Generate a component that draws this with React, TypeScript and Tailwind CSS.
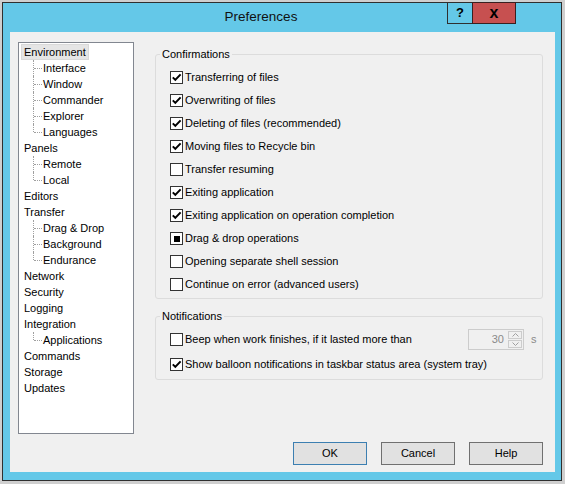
import type { ReactNode } from 'react'

type CheckState = 'on' | 'off' | 'mixed'

interface TreeNode {
  label: string
  children?: string[]
}

const tree: TreeNode[] = [
  { label: 'Environment', children: ['Interface', 'Window', 'Commander', 'Explorer', 'Languages'] },
  { label: 'Panels', children: ['Remote', 'Local'] },
  { label: 'Editors' },
  { label: 'Transfer', children: ['Drag & Drop', 'Background', 'Endurance'] },
  { label: 'Network' },
  { label: 'Security' },
  { label: 'Logging' },
  { label: 'Integration', children: ['Applications'] },
  { label: 'Commands' },
  { label: 'Storage' },
  { label: 'Updates' },
]

const confirmations: [string, CheckState][] = [
  ['Transferring of files', 'on'],
  ['Overwriting of files', 'on'],
  ['Deleting of files (recommended)', 'on'],
  ['Moving files to Recycle bin', 'on'],
  ['Transfer resuming', 'off'],
  ['Exiting application', 'on'],
  ['Exiting application on operation completion', 'on'],
  ['Drag & drop operations', 'mixed'],
  ['Opening separate shell session', 'off'],
  ['Continue on error (advanced users)', 'off'],
]

function CheckBox({ state }: { state: CheckState }) {
  return (
    <span className="flex h-[13px] w-[13px] shrink-0 items-center justify-center border border-[#333333] bg-white">
      {state === 'on' && (
        <svg width="11" height="11" viewBox="0 0 11 11">
          <path d="M1.8 5.4 L4.3 7.9 L9.6 2.4" fill="none" stroke="#000" strokeWidth="2" />
        </svg>
      )}
      {state === 'mixed' && <span className="h-[6px] w-[6px] bg-black" />}
    </span>
  )
}

function GroupBox({ title, className, children }: { title: string; className?: string; children: ReactNode }) {
  return (
    <fieldset className={`rounded-[3px] border border-[#dcdcdc] ${className ?? ''}`}>
      <legend className="ml-[4px] px-[2px] leading-[14px]">{title}</legend>
      {children}
    </fieldset>
  )
}

function Connector({ last }: { last: boolean }) {
  return (
    <span className="relative h-[16px] w-[10px] shrink-0">
      <span
        className={`absolute left-0 top-0 w-0 border-l border-dotted border-[#a0a0a0] ${last ? 'h-[8px]' : 'h-[16px]'}`}
      />
      <span className="absolute left-[1px] top-[8px] h-0 w-[8px] border-t border-dotted border-[#a0a0a0]" />
    </span>
  )
}

function Tree() {
  return (
    <div className="h-[392px] w-[116px] shrink-0 border border-[#828790] bg-white pt-[1px]">
      {tree.map((node, i) => (
        <div key={node.label}>
          <div className="flex h-[16px] items-center pl-[2px]">
            <span
              className={`h-[16px] border px-[2px] leading-[14px] ${
                i === 0 ? 'border-[#d9d9d9] bg-[#e5e5e5]' : 'border-transparent'
              }`}
            >
              {node.label}
            </span>
          </div>
          {node.children?.map((child, j) => (
            <div key={child} className="flex h-[16px] items-center pl-[14px]">
              <Connector last={j === node.children!.length - 1} />
              <span className="leading-[16px]">{child}</span>
            </div>
          ))}
        </div>
      ))}
    </div>
  )
}

function SpinEdit() {
  return (
    <div className="flex h-[21px] w-[56px] border border-[#cccccc] bg-[#f0f0f0]">
      <span className="flex flex-1 items-center justify-end pr-[4px] text-[#8a8a8a]">30</span>
      <div className="flex w-[15px] flex-col gap-[1px] py-[1px] pr-[1px]">
        <span className="flex h-[9px] items-center justify-center border border-[#cccccc]">
          <svg width="7" height="4" viewBox="0 0 7 4">
            <path d="M0.5 3.5 L3.5 0.5 L6.5 3.5" fill="none" stroke="#a0a0a0" strokeWidth="1" />
          </svg>
        </span>
        <span className="flex h-[9px] items-center justify-center border border-[#cccccc]">
          <svg width="7" height="4" viewBox="0 0 7 4">
            <path d="M0.5 0.5 L3.5 3.5 L6.5 0.5" fill="none" stroke="#a0a0a0" strokeWidth="1" />
          </svg>
        </span>
      </div>
    </div>
  )
}

function DialogButton({ label, primary }: { label: string; primary?: boolean }) {
  return (
    <button
      className={`h-[23px] w-[74px] border bg-[#e1e1e1] ${primary ? 'border-[#3c7fb1]' : 'border-[#707070]'}`}
    >
      {label}
    </button>
  )
}

export default function App() {
  return (
    <div className="h-[484px] w-[565px] overflow-hidden bg-[#cfcfcf] pl-[2px] pt-[2px] font-['Liberation_Sans',Arial,sans-serif] text-[11px] text-black">
      <div className="relative flex h-[479px] w-[560px] flex-col border border-[#2f2f2f] bg-[#64c8e8]">
        {/* Title bar */}
        <div className="flex h-[29px] shrink-0 items-center justify-center pr-[42px] text-[13.5px] text-[#111]">
          Preferences
        </div>
        <div className="absolute right-[45px] top-[-1px] flex">
          <span className="flex h-[22px] w-[26px] items-center justify-center border border-[#2f2f2f] bg-[#64c8e8] text-[13px] font-bold">
            ?
          </span>
          <span className="-ml-[1px] flex h-[22px] w-[44px] items-center justify-center border border-[#3a2020] bg-[#c75050] pb-[1px] text-[16px] font-bold leading-none">
            x
          </span>
        </div>

        {/* Client area */}
        <div className="ml-[7px] flex h-[440px] w-[545px] flex-col bg-[#f0f0f0] pl-[8px] pt-[10px]">
          <div className="flex gap-[21px]">
            <Tree />
            <div className="flex w-[388px] flex-col">
              <GroupBox title="Confirmations" className="mt-[5px] pb-[2px] pt-[5px]">
                {confirmations.map(([label, state]) => (
                  <div key={label} className="flex h-[23px] items-center gap-[2px] pl-[14px]">
                    <CheckBox state={state} />
                    <span>{label}</span>
                  </div>
                ))}
              </GroupBox>
              <GroupBox title="Notifications" className="mt-[10px] pb-[4px] pt-[5px]">
                <div className="flex h-[22px] items-center pl-[14px] pr-[5px]">
                  <CheckBox state="off" />
                  <span className="ml-[2px] flex-1">Beep when work finishes, if it lasted more than</span>
                  <SpinEdit />
                  <span className="ml-[7px] w-[6px] text-[#8a8a8a]">s</span>
                </div>
                <div className="mt-[3px] flex h-[22px] items-center gap-[2px] pl-[14px]">
                  <CheckBox state="on" />
                  <span>Show balloon notifications in taskbar status area (system tray)</span>
                </div>
              </GroupBox>
            </div>
          </div>
          <div className="mt-[8px] flex justify-end gap-[14px] pr-[12px]">
            <DialogButton label="OK" primary />
            <DialogButton label="Cancel" />
            <DialogButton label="Help" />
          </div>
        </div>
      </div>
    </div>
  )
}
